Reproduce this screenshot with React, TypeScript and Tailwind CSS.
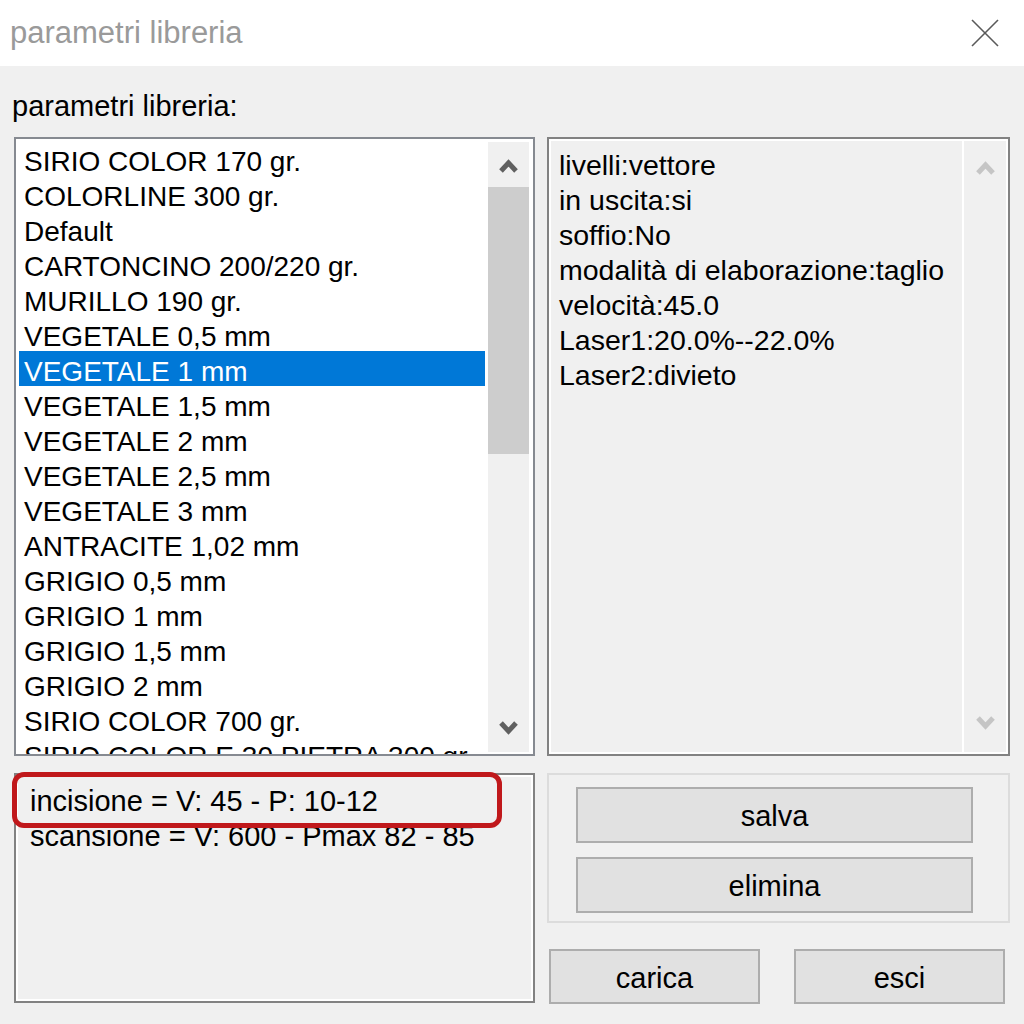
import React from "react";

const items = [
  "SIRIO COLOR 170 gr.",
  "COLORLINE 300 gr.",
  "Default",
  "CARTONCINO 200/220 gr.",
  "MURILLO 190 gr.",
  "VEGETALE 0,5 mm",
  "VEGETALE 1 mm",
  "VEGETALE 1,5 mm",
  "VEGETALE 2 mm",
  "VEGETALE 2,5 mm",
  "VEGETALE 3 mm",
  "ANTRACITE 1,02 mm",
  "GRIGIO 0,5 mm",
  "GRIGIO 1 mm",
  "GRIGIO 1,5 mm",
  "GRIGIO 2 mm",
  "SIRIO COLOR 700 gr.",
  "SIRIO COLOR E 30 PIETRA 300 gr.",
];

const details = [
  "livelli:vettore",
  "in uscita:si",
  "soffio:No",
  "modalità di elaborazione:taglio",
  "velocità:45.0",
  "Laser1:20.0%--22.0%",
  "Laser2:divieto",
];

function Chevron({ up, color }: { up: boolean; color: string }) {
  return (
    <svg width="21" height="15" viewBox="0 0 21 15">
      <polyline
        points={up ? "3,13 10.5,5 18,13" : "3,2 10.5,10 18,2"}
        fill="none"
        stroke={color}
        strokeWidth="5"
        strokeLinejoin="miter"
      />
    </svg>
  );
}

function Btn({ label, className }: { label: string; className: string }) {
  return (
    <div
      className={
        "flex items-center justify-center bg-[#e1e1e1] border-2 border-[#adadad] text-[29px] leading-none text-black pt-[3px] " +
        className
      }
    >
      {label}
    </div>
  );
}

export default function App() {
  return (
    <div
      className="w-[1024px] h-[1024px] bg-[#f0f0f0] flex flex-col overflow-hidden text-black"
      style={{ fontFamily: '"Liberation Sans", Arial, sans-serif' }}
    >
      {/* title bar */}
      <div className="h-[66px] bg-white flex items-center justify-between pl-[10px] pr-[24px] shrink-0">
        <span className="text-[31px] text-[#9a9a9a] leading-none -mt-[2px]">parametri libreria</span>
        <svg width="30" height="30" viewBox="0 0 30 30">
          <line x1="2" y1="2" x2="28" y2="28" stroke="#5a5a5a" strokeWidth="1.6" />
          <line x1="28" y1="2" x2="2" y2="28" stroke="#5a5a5a" strokeWidth="1.6" />
        </svg>
      </div>

      <div className="px-[14px] flex flex-col">
        <div className="mt-[22px] h-[35px] flex items-center pt-[2px] text-[29px] leading-none -ml-[2px]">
          parametri libreria:
        </div>

        {/* top row */}
        <div className="mt-[14px] flex gap-[12px] h-[619px]">
          {/* list */}
          <div className="w-[521px] h-full border-2 border-[#868a91] bg-white flex">
            <div className="w-[469px] pl-[3px] pt-[2px] overflow-hidden h-full">
              {items.map((it, i) => (
                <div
                  key={it}
                  className={
                    "h-[35px] w-[466px] flex items-center pl-[5px] pt-[6px] text-[28px] leading-none whitespace-nowrap " +
                    (i === 6 ? "bg-[#0078d7] text-white" : "text-black")
                  }
                >
                  {it}
                </div>
              ))}
            </div>
            <div className="ml-[3px] w-[41px] mt-[3px] mb-[2px] bg-[#f0f0f0] flex flex-col">
              <div className="h-[45px] flex items-center justify-center pt-[2px]">
                <Chevron up color="#606060" />
              </div>
              <div className="h-[267px] bg-[#cdcdcd]" />
              <div className="flex-1" />
              <div className="h-[45px] flex items-center justify-center pb-[2px]">
                <Chevron up={false} color="#606060" />
              </div>
            </div>
          </div>

          {/* detail box */}
          <div className="w-[463px] h-full border-2 border-[#828282]">
            <div className="h-full border-2 border-white bg-[#f0f0f0] flex">
              <div className="flex-1 pl-[8px] pt-[3px]">
                {details.map((d) => (
                  <div
                    key={d}
                    className="h-[35px] flex items-center pt-[7px] text-[28.5px] leading-none whitespace-nowrap"
                  >
                    {d}
                  </div>
                ))}
              </div>
              <div className="w-[44px] border-l-2 border-white flex flex-col justify-between">
                <div className="h-[50px] flex items-center justify-center pt-[2px]">
                  <Chevron up color="#c5c5c5" />
                </div>
                <div className="h-[50px] flex items-center justify-center pb-[8px]">
                  <Chevron up={false} color="#c5c5c5" />
                </div>
              </div>
            </div>
          </div>
        </div>

        {/* bottom row */}
        <div className="mt-[17px] flex gap-[12px]">
          <div className="relative w-[521px] h-[230px] border-2 border-[#828282]">
            <div className="h-full border-2 border-white bg-[#f0f0f0] pl-[12px] pt-[6px]">
              <div className="h-[35px] flex items-center pt-[2px] text-[29px] leading-none whitespace-nowrap">
                incisione = V: 45 - P: 10-12
              </div>
              <div className="h-[35px] flex items-center pt-[2px] text-[29px] leading-none whitespace-nowrap">
                scansione = V: 600 - Pmax 82 - 85
              </div>
            </div>
            <div className="absolute left-[-4px] top-[-3px] w-[490px] h-[56px] border-[5px] border-[#c0181b] rounded-[12px]" />
          </div>

          <div className="w-[463px] flex flex-col">
            <div className="h-[150px] border-2 border-[#dcdcdc] pl-[27px] pt-[12px] flex flex-col gap-[14px]">
              <Btn label="salva" className="w-[397px] h-[56px]" />
              <Btn label="elimina" className="w-[397px] h-[56px]" />
            </div>
            <div className="mt-[26px] flex justify-between pl-[2px] pr-[5px]">
              <Btn label="carica" className="w-[211px] h-[55px]" />
              <Btn label="esci" className="w-[211px] h-[55px]" />
            </div>
          </div>
        </div>
      </div>
    </div>
  );
}
